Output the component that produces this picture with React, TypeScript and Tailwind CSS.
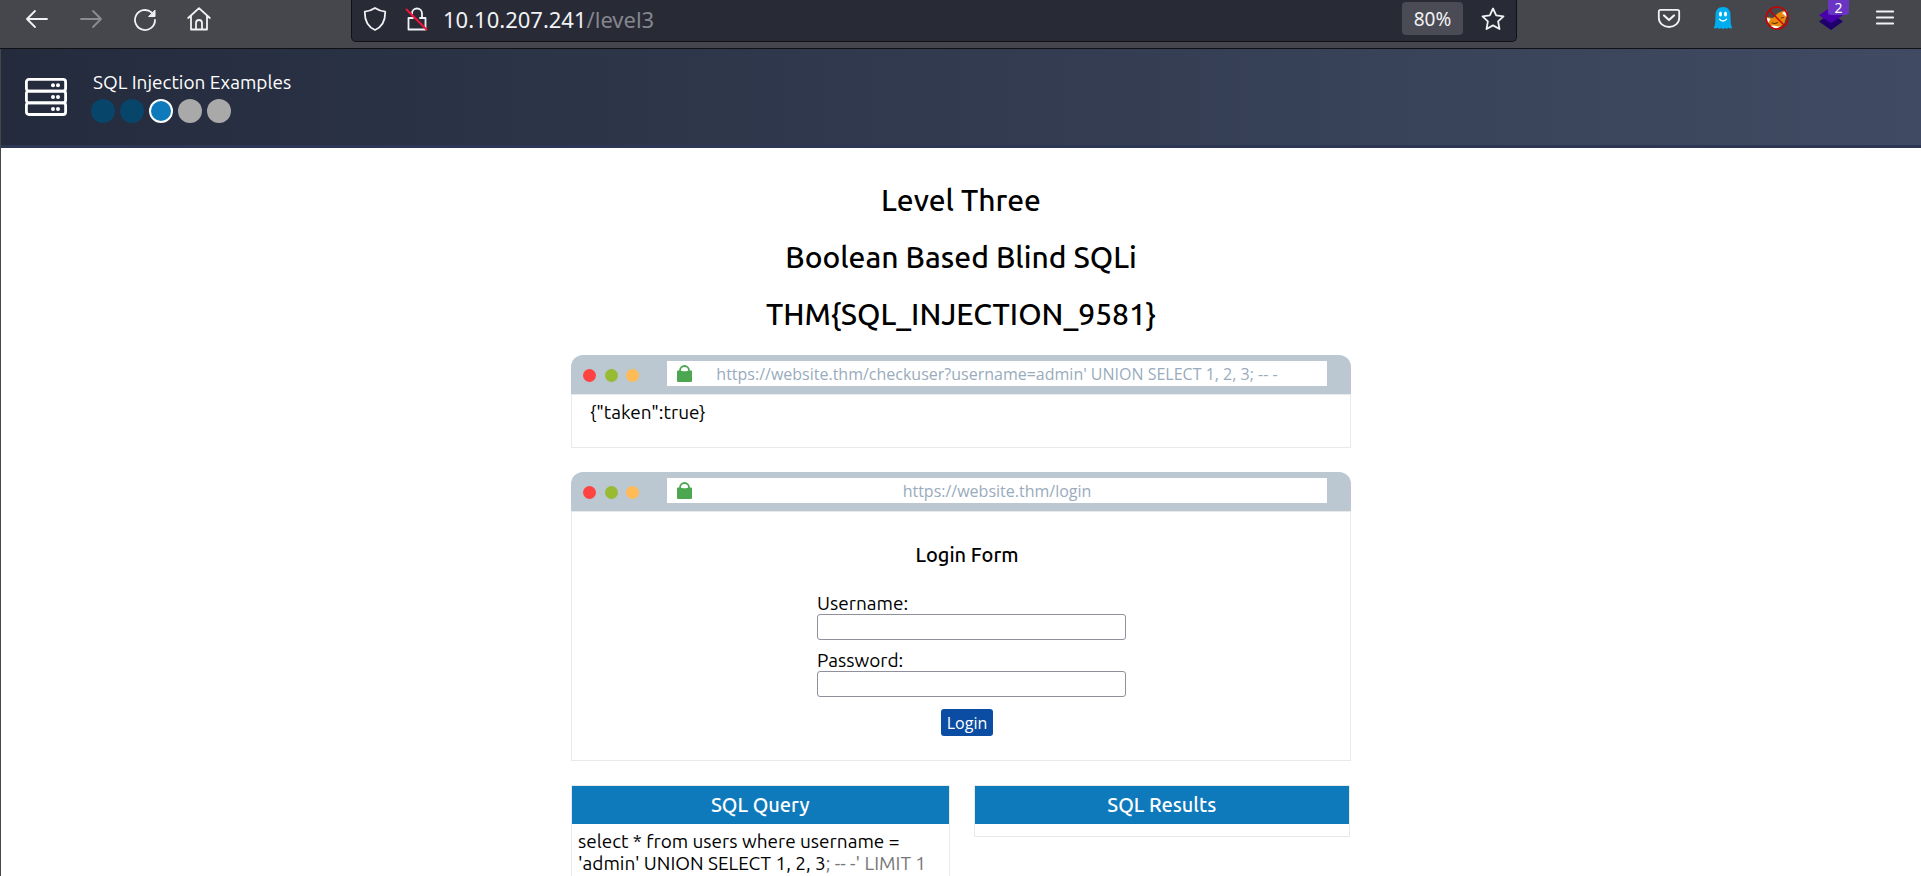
import type { ReactNode } from "react";

function Icon({ size = 24, className = "", children }: { size?: number; className?: string; children: ReactNode }) {
  return (
    <svg
      width={size}
      height={size}
      viewBox="0 0 24 24"
      fill="none"
      stroke="currentColor"
      strokeWidth="1.8"
      strokeLinecap="round"
      strokeLinejoin="round"
      className={className}
      aria-hidden="true"
    >
      {children}
    </svg>
  );
}

function ToolButton({ label, children }: { label: string; children: ReactNode }) {
  return (
    <button type="button" aria-label={label} className="relative flex size-6 shrink-0 items-center justify-center">
      {children}
    </button>
  );
}

function Toolbar() {
  return (
    <div className="flex shrink-0 items-start border-b border-[#101114] bg-[#45474d] pb-1.5 text-[#f2f2f4]">
      <nav aria-label="Navigation" className="flex w-[351px] shrink-0 gap-[30px] pl-[25px] pt-[7px]">
        <ToolButton label="Back">
          <Icon>
            <path d="M22 12H2M10 4l-8 8 8 8" />
          </Icon>
        </ToolButton>
        <ToolButton label="Forward">
          <Icon className="text-[#8b8c90]">
            <path d="M2 12h20M14 4l8 8-8 8" />
          </Icon>
        </ToolButton>
        <ToolButton label="Reload">
          <Icon>
            <path d="M22 13A10 10 0 1 1 18.5 5.4" />
            <path d="M22 3.500v6h-6z" fill="currentColor" strokeWidth="1" />
          </Icon>
        </ToolButton>
        <ToolButton label="Home">
          <Icon>
            <path d="M1.200 11 12 1.200 22.800 11M4 9v13.500h16V9M9 22v-6a3 3 0 0 1 6 0v6" />
          </Icon>
        </ToolButton>
      </nav>

      <div className="flex h-[42px] min-w-0 flex-1 items-center rounded-b-[5px] border border-t-0 border-[#101114] bg-[#282a36] pb-1 pl-[11px] pr-[11px]">
        <ToolButton label="Tracking protection">
          <Icon>
            <path d="M12 1C9 3 5.500 4.200 1.800 4.700c-.2 8 2.500 15 10.200 18.300 7.700-3.300 10.400-10.300 10.200-18.300C18.500 4.200 15 3 12 1z" />
          </Icon>
        </ToolButton>
        <span className="ml-[18px] flex">
          <ToolButton label="Connection not secure">
            <Icon>
              <path d="M7 7.500V6.500a5 5 0 0 1 10 0V11M8 11H3.500v11.500h17V11H15" />
              <path d="M1.500 2.500 21.500 22.500" stroke="#f0143c" strokeWidth="2" />
            </Icon>
          </ToolButton>
        </span>
        <span className="ml-[14px] flex-1 truncate font-['Noto_Sans',sans-serif] text-[22px] leading-8">
          10.10.207.241<span className="text-[#85868e]">/level3</span>
        </span>
        <button
          type="button"
          className="mr-[18px] h-[33px] w-[61px] rounded-[4px] bg-[#4a4b55] font-['Noto_Sans',sans-serif] text-[19px]"
        >
          80%
        </button>
        <ToolButton label="Bookmark">
          <Icon>
            <path d="m12 1.500 3.200 6.800 7.300 1-5.400 5.100 1.400 7.600L12 18.400 5.500 22l1.400-7.600L1.500 9.300l7.300-1z" />
          </Icon>
        </ToolButton>
      </div>

      <div className="flex w-[404px] shrink-0 justify-end gap-[30px] pr-6 pt-[6px]">
        <ToolButton label="Pocket">
          <Icon>
            <path d="M3.500 3.800h17a1.700 1.700 0 0 1 1.700 1.700V12a10.200 9 0 0 1-20.400 0V5.500a1.700 1.700 0 0 1 1.700-1.700z" />
            <path d="m7 9.500 5 4.500 5-4.500" strokeWidth="2.200" />
          </Icon>
        </ToolButton>
        <ToolButton label="Ghostery">
          <Icon>
            <path
              d="M12 1C7 1 4.500 4.500 4.500 9c0 6-.2 10-1.700 13 1.500.8 2.800.5 3.800-.5.8 1.500 2.600 1.700 3.400.3.800 1.500 3.200 1.500 4 0 .8 1.400 2.600 1.200 3.400-.3 1 1 2.300 1.300 3.800.5-1.500-3-1.700-7-1.700-13C19.500 4.500 17 1 12 1z"
              fill="#00aef0"
              stroke="none"
            />
            <ellipse cx="9.500" cy="8" rx="1.500" ry="2.500" fill="#fff" stroke="none" />
            <ellipse cx="14.500" cy="8" rx="1.500" ry="2.500" fill="#fff" stroke="none" />
            <path d="M8.500 13.200c1.700 2.400 5.300 2.400 7 0" stroke="#fff" strokeWidth="1.300" />
          </Icon>
        </ToolButton>
        <ToolButton label="FoxyProxy">
          <Icon>
            <path d="M2 11 8 12l5-5 7-3 1 8-2 6-6 4-6-1-4-5z" fill="#e8890c" stroke="none" />
            <path d="M1.500 11.500 5.500 13 3 17zM21.500 4.500 17 7l4.500 4zM5 20l4-.5 4 1 3-.5-5 2.700z" fill="#fff" stroke="none" />
            <path d="m7 17 3 .5M16 12l2.500-.5M10.500 17.500l2-1" stroke="#6b3206" strokeWidth="1.200" />
            <circle cx="12" cy="12" r="11" stroke="#c80000" strokeWidth="1.500" />
            <path d="m4.500 4.500 15 15" stroke="#c80000" strokeWidth="1.500" />
          </Icon>
        </ToolButton>
        <ToolButton label="Wappalyzer, 2 detected">
          <Icon>
            <path d="M0 15.500 5 12l7 4.500L19 12l5 3.500L12 24z" fill="#1d0069" stroke="none" />
            <path d="M12 1 24 9.200 12 17.200 0 9.200z" fill="#4801ad" stroke="none" />
          </Icon>
          <span className="absolute -top-1.5 left-[9px] flex h-[15px] w-[21px] items-center justify-center rounded-b-[3px] bg-[#6b35c4] font-['Noto_Sans',sans-serif] text-[14px] leading-none text-white">
            2
          </span>
        </ToolButton>
        <ToolButton label="Menu">
          <Icon>
            <path d="M3.800 5.500h16.400M3.800 11.500h16.400M3.800 17.500h16.400" />
          </Icon>
        </ToolButton>
      </div>
    </div>
  );
}

const levels = [
  "bg-[#07456a]",
  "bg-[#07456a]",
  "bg-[#0f7abb] border-2 border-white",
  "bg-[#a9a9a9]",
  "bg-[#a9a9a9]",
];

function SiteHeader() {
  return (
    <header className="flex h-[99px] shrink-0 items-center border-b-[3px] border-[#2d3654] bg-linear-to-r from-[#242b3d] to-[#404b63] pl-6 text-white">
      <svg width="42" height="38" viewBox="0 0 42 38" fill="none" stroke="#fff" strokeWidth="2.800" aria-hidden="true">
        <rect x="1.400" y="1.400" width="39.200" height="11.700" rx="2.500" />
        <rect x="1.400" y="13.100" width="39.200" height="11.700" rx="2.500" />
        <rect x="1.400" y="24.800" width="39.200" height="11.700" rx="2.500" />
        <g fill="#fff" stroke="none">
          <circle cx="28" cy="7.200" r="2" />
          <circle cx="33" cy="7.200" r="2" />
          <circle cx="28" cy="19" r="2" />
          <circle cx="33" cy="19" r="2" />
          <circle cx="28" cy="31" r="2" />
          <circle cx="33" cy="31" r="2" />
        </g>
      </svg>
      <div className="ml-6">
        <div className="ml-0.5">SQL Injection Examples</div>
        <ol aria-label="Levels" className="mt-1.5 flex gap-[5px]">
          {levels.map((tone, i) => (
            <li key={i} className={`size-6 rounded-full ${tone}`} />
          ))}
        </ol>
      </div>
    </header>
  );
}

function MockBrowser({ url, children }: { url: string; children: ReactNode }) {
  return (
    <section className="mb-6">
      <div className="flex h-[39px] items-center rounded-t-[12px] bg-[#bbc7d1] pl-3 pr-6">
        <div className="flex w-[84px] shrink-0 gap-2 pt-0.5">
          <span className="size-[13px] rounded-full bg-[#ff4340]" />
          <span className="ml-px size-[13px] rounded-full bg-[#99bb33]" />
          <span className="size-[13px] rounded-full bg-[#ffbb55]" />
        </div>
        <div className="mb-0.5 flex h-[25px] min-w-0 flex-1 items-center bg-white pl-2.5 font-['Open_Sans',sans-serif] text-[16px] text-[#99abbd]">
          <svg width="15" height="17" viewBox="0 0 15 17" fill="none" aria-hidden="true" className="shrink-0">
            <path d="M3 7V5.500a4.500 4.500 0 0 1 9 0V7" stroke="#4ca750" strokeWidth="1.800" />
            <path d="M1 5.500h2.500c1 1 7 1 8 0H14a1 1 0 0 1 1 1V16a1 1 0 0 1-1 1H1a1 1 0 0 1-1-1V6.500a1 1 0 0 1 1-1z" fill="#4ca750" />
          </svg>
          <span className="flex-1 truncate pr-[25px] text-center">{url}</span>
        </div>
      </div>
      <div className="border border-[#e9e9e9] pl-[18px] pr-1.5">{children}</div>
    </section>
  );
}

function Field({ id, label, type }: { id: string; label: string; type: string }) {
  return (
    <div className="mb-[9px]">
      <label htmlFor={id} className="block">
        {label}
      </label>
      <input id={id} type={type} className="block h-[26px] w-[309px] rounded-[3px] border border-[#8f8f9d] bg-white px-1" />
    </div>
  );
}

function Panel({ title, children }: { title: string; children?: ReactNode }) {
  return (
    <section className="min-w-0 flex-1 border border-[#e9e9e9]">
      <h2 className="bg-[#0f7abb] text-center text-[20px] font-medium leading-[38px] text-white">{title}</h2>
      <div className="p-1.5">{children}</div>
    </section>
  );
}

export default function App() {
  return (
    <div className="flex h-screen flex-col overflow-hidden bg-white font-[Ubuntu,'Noto_Sans',sans-serif] text-[19px] leading-[22px] text-black">
      <Toolbar />
      <div className="flex min-h-0 flex-1 flex-col overflow-hidden border-l border-[#45474d]">
        <SiteHeader />
        <main className="mx-auto w-full max-w-[780px] pt-[35px]">
          <div className="mb-6 flex flex-col gap-[23px] text-center text-[30px] font-medium leading-[34px]">
            <h1>Level Three</h1>
            <h1>Boolean Based Blind SQLi</h1>
            <h1>{"THM{SQL_INJECTION_9581}"}</h1>
          </div>

          <MockBrowser url="https://website.thm/checkuser?username=admin' UNION SELECT 1, 2, 3; -- -">
            <div className="pb-6 pt-1.5">{'{"taken":true}'}</div>
          </MockBrowser>

          <MockBrowser url="https://website.thm/login">
            <form className="pb-6 pt-8" onSubmit={(e) => e.preventDefault()}>
              <h2 className="mb-[26px] text-center text-[20px] font-medium leading-[22px]">Login Form</h2>
              <div className="mx-auto w-[300px]">
                <Field id="username" label="Username:" type="text" />
                <Field id="password" label="Password:" type="password" />
              </div>
              <button
                type="submit"
                className="mx-auto mt-3 block h-[27px] w-[52px] rounded-[3px] bg-[#0b4da2] font-['Open_Sans',sans-serif] text-[16px] leading-6 text-white"
              >
                Login
              </button>
            </form>
          </MockBrowser>

          <div className="flex gap-6 pr-px">
            <Panel title="SQL Query">
              select * from users where username = 'admin' UNION SELECT 1, 2, 3
              <span className="text-[#777]">; -- -' LIMIT 1</span>
            </Panel>
            <div className="flex min-w-0 flex-1 items-start">
              <Panel title="SQL Results" />
            </div>
          </div>
        </main>
      </div>
    </div>
  );
}
